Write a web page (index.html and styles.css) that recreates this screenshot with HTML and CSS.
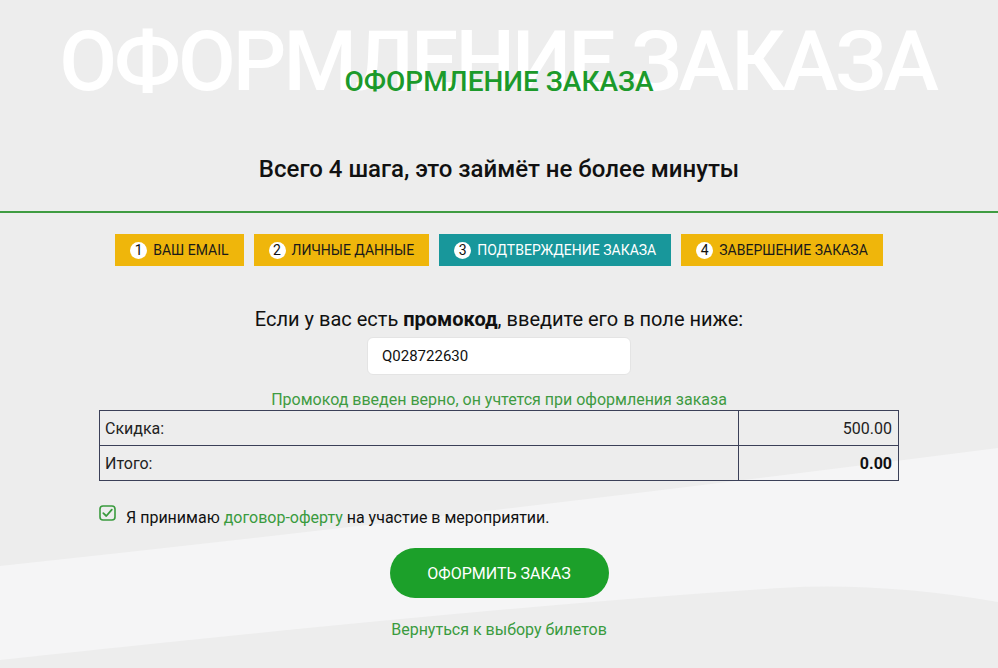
FILE: index.html
```html
<!DOCTYPE html>
<html lang="ru">
<head>
<meta charset="utf-8">
<title>Оформление заказа</title>
<link rel="stylesheet" href="styles.css">
</head>
<body>
<svg class="bg-wave" viewBox="0 0 998 668" preserveAspectRatio="none" aria-hidden="true">
  <path d="M0,566 Q500,512 998,448 L998,602 Q880,582 780,588 Q500,606 0,660 Z" fill="#f5f5f6"/>
</svg>
<div class="page">
  <header class="header">
    <div class="hero">
      <div class="hero-bg">ОФОРМЛЕНИЕ ЗАКАЗА</div>
      <h1 class="hero-title">ОФОРМЛЕНИЕ ЗАКАЗА</h1>
    </div>
    <p class="subtitle">Всего 4 шага, это займёт не более минуты</p>
  </header>

  <nav class="steps">
    <div class="step"><span class="step-num">1</span>ВАШ EMAIL</div>
    <div class="step"><span class="step-num">2</span>ЛИЧНЫЕ ДАННЫЕ</div>
    <div class="step step-active"><span class="step-num">3</span>ПОДТВЕРЖДЕНИЕ ЗАКАЗА</div>
    <div class="step"><span class="step-num">4</span>ЗАВЕРШЕНИЕ ЗАКАЗА</div>
  </nav>

  <main class="content">
    <p class="promo-label">Если у вас есть <b>промокод</b>, введите его в поле ниже:</p>
    <div class="promo-field"><input class="promo-input" type="text" value="Q028722630"></div>
    <p class="promo-ok">Промокод введен верно, он учтется при оформления заказа</p>

    <table class="summary">
      <tr><td class="label">Скидка:</td><td class="value">500.00</td></tr>
      <tr><td class="label">Итого:</td><td class="value total">0.00</td></tr>
    </table>

    <label class="agree">
      <span class="check">
        <svg viewBox="0 0 17 16" width="17" height="16"><rect x="1" y="1" width="15" height="14" rx="3" fill="none" stroke="#3a9b3e" stroke-width="1.6"/><path d="M4.3 8.2 L7.3 11 L12.8 4.6" fill="none" stroke="#3a9b3e" stroke-width="1.8" stroke-linecap="round" stroke-linejoin="round"/></svg>
      </span>
      <span class="agree-text">Я принимаю <a href="#" class="link">договор-оферту</a> на участие в мероприятии.</span>
    </label>

    <div class="actions">
      <button class="submit" type="button">ОФОРМИТЬ ЗАКАЗ</button>
      <a href="#" class="back link">Вернуться к выбору билетов</a>
    </div>
  </main>
</div>
</body>
</html>
```

FILE: styles.css
```css
html, body {
  margin: 0;
  padding: 0;
}
body {
  background: #ededed;
  font-family: Roboto, "Noto Sans", Arial, sans-serif;
  color: #111;
  position: relative;
  min-height: 668px;
  overflow: hidden;
}
.bg-wave {
  position: absolute;
  left: 0;
  top: 0;
  width: 998px;
  height: 668px;
  z-index: 0;
  pointer-events: none;
}
.page {
  position: relative;
  z-index: 1;
}
.header {
  height: 211px;
  border-bottom: 2px solid #3f9c42;
  text-align: center;
  box-sizing: content-box;
}
.hero {
  display: grid;
  justify-items: center;
}
.hero > * {
  grid-area: 1 / 1;
}
.hero-bg {
  margin-top: 20px;
  font-size: 84px;
  line-height: 1;
  font-weight: 500;
  color: #ffffff;
  white-space: nowrap;
  letter-spacing: -3px;
  text-indent: -3px;
}
.hero-title {
  margin: 68px 0 0;
  font-size: 28px;
  line-height: 1;
  font-weight: 500;
  color: #1c9a2b;
}
.subtitle {
  margin: 53px 0 0;
  font-size: 24px;
  line-height: 1;
  font-weight: 500;
  color: #111;
}
.steps {
  margin-top: 21px;
  display: flex;
  justify-content: center;
  gap: 10px;
}
.step {
  height: 32px;
  display: flex;
  align-items: center;
  gap: 6px;
  padding: 0 15px 0 15px;
  background: #efb60b;
  color: #1a1a1a;
  font-size: 14px;
  white-space: nowrap;
}
.step-active {
  background: #18979b;
  color: #fff;
}
.step-num {
  width: 17px;
  height: 17px;
  border-radius: 50%;
  background: #fff;
  color: #111;
  font-size: 14px;
  display: flex;
  align-items: center;
  justify-content: center;
  line-height: 1;
}
.content {
  width: 800px;
  margin: 0 auto;
  text-align: center;
}
.promo-label {
  margin: 42px 0 0;
  font-size: 20px;
  line-height: 22px;
  color: #111;
}
.promo-label b {
  font-weight: 700;
}
.promo-field {
  margin-top: 7px;
  display: flex;
  justify-content: center;
}
.promo-input {
  width: 264px;
  height: 38px;
  box-sizing: border-box;
  border: 1px solid #e4e4e4;
  border-radius: 6px;
  background: #fff;
  padding: 0 14px;
  font-family: Roboto, Arial, sans-serif;
  font-size: 15px;
  color: #111;
  outline: none;
}
.promo-ok {
  margin: 16px 0 0;
  font-size: 16px;
  line-height: 18px;
  color: #3f9b42;
}
.summary {
  margin-top: 1px;
  width: 800px;
  border-collapse: collapse;
  font-size: 16px;
  color: #222;
}
.summary td {
  border: 1px solid #3b4058;
  height: 35px;
  padding: 0 6px;
  box-sizing: border-box;
}
.summary .label {
  text-align: left;
  padding-left: 5px;
}
.summary .value {
  text-align: right;
  width: 160px;
}
.summary .total {
  font-weight: 700;
  color: #111;
}
.agree {
  margin-top: 24px;
  display: flex;
  align-items: flex-start;
  gap: 10px;
  text-align: left;
  font-size: 16px;
  line-height: 20px;
  color: #111;
}
.check {
  display: block;
  width: 17px;
  height: 16px;
}
.check svg {
  display: block;
}
.agree-text {
  margin-top: 3px;
}
.link {
  color: #3a9b3e;
  text-decoration: none;
}
.actions {
  display: flex;
  flex-direction: column;
  align-items: center;
}
.submit {
  margin-top: 20px;
  width: 219px;
  height: 50px;
  border: none;
  border-radius: 25px;
  background: #1ca02a;
  color: #fff;
  font-family: Roboto, Arial, sans-serif;
  font-size: 16px;
  cursor: pointer;
}
.back {
  margin-top: 22px;
  font-size: 16px;
  line-height: 20px;
}
```
